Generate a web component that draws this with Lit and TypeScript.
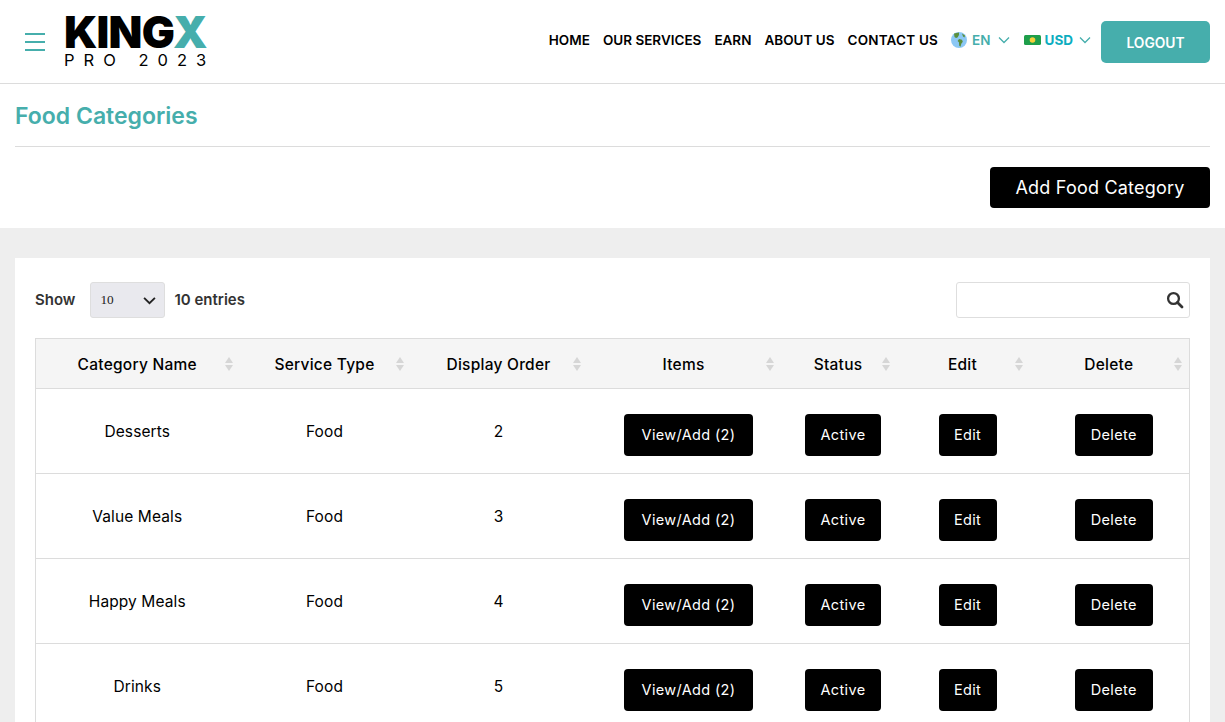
import { LitElement, html, css } from "lit";
import { customElement } from "lit/decorators.js";

const rows = [
  ["Desserts", "Food", "2"],
  ["Value Meals", "Food", "3"],
  ["Happy Meals", "Food", "4"],
  ["Drinks", "Food", "5"],
];
const heads = ["Category Name", "Service Type", "Display Order", "Items", "Status", "Edit", "Delete"];
const cols = ["c1", "c2", "c3", "c4", "c5", "c6", "c7"];

const chevron = html`<svg class="chev" viewBox="0 0 12 8" width="12" height="8"><path d="M1 1.5l5 5 5-5" fill="none" stroke="currentColor" stroke-width="1.3"/></svg>`;
const sortIcon = html`<svg class="sort" viewBox="0 0 8 14" width="8" height="14"><path d="M4 0L8 6H0Z" fill="#d6d6d6"/><path d="M4 14L8 8H0Z" fill="#d6d6d6"/></svg>`;

@customElement("app-root")
export class AppRoot extends LitElement {
  static styles = css`
    :host {
      display: block;
      height: 722px;
      overflow: hidden;
      background: #eeeeee;
      font-family: Inter, "Noto Sans", sans-serif;
      color: #000;
    }
    .top { background: #fff; }
    header {
      height: 83px;
      border-bottom: 1px solid #dcdcdc;
      display: flex;
      align-items: center;
      padding: 0 15px 0 25px;
    }
    .burger { width: 20px; display: flex; flex-direction: column; gap: 6px; margin-right: 19px; margin-top: 1px; }
    .burger i { display: block; height: 2px; background: #46aeac; }
    .logo { display: flex; flex-direction: column; width: 150px; margin-bottom: 2px; }
    .king { font-size: 44px; line-height: 38px; font-weight: 900; letter-spacing: -0.8px; }
    .king span { color: #46aeac; }
    .pro { font-size: 16.5px; line-height: 18px; letter-spacing: 9px; font-weight: 400; white-space: nowrap; }
    nav { margin-left: auto; display: flex; align-items: center; gap: 13px; font-size: 13.5px; font-weight: 600; white-space: nowrap; margin-top: -3px; }
    .wide { letter-spacing: .2px; }
    .lang { display: flex; align-items: center; gap: 5px; color: #46aeac; }
    .lang.usd { color: #0cadc0; margin-left: 1px; gap: 4px; font-weight: 700; }
    .chev { color: #46aeac; margin-left: 2px; }
    .logout {
      width: 109px; height: 42px; box-sizing: border-box; padding-top: 2px; border-radius: 5px; background: #46aeac; color: #fff;
      display: flex; align-items: center; justify-content: center; font-size: 13.8px; font-weight: 600;
      margin-left: -3px; margin-top: 3px;
    }
    .title { margin: 0 15px; height: 63px; padding-top: 1px; border-bottom: 1px solid #dcdcdc; display: flex; align-items: center; box-sizing: border-box; }
    h1 { margin: 0; font-size: 23px; font-weight: 600; color: #46aeac; }
    .actions { display: flex; justify-content: flex-end; padding: 20px 15px; }
    .add {
      width: 220px; height: 41px; background: #000; color: #fff; border-radius: 4px;
      display: flex; align-items: center; justify-content: center; font-size: 18px; letter-spacing: .2px;
    }
    .card { background: #fff; margin: 30px 15px 0; padding: 24px 20px 0; height: 500px; }
    .controls { display: flex; align-items: center; height: 36px; font-size: 15px; font-weight: 600; color: #333; }
    .controls > span { margin-top: -1px; }
    .select {
      width: 75px; height: 36px; box-sizing: border-box; margin: 0 9px 0 15px; padding: 0 8px 0 9px;
      background: #e9e9ee; border: 1px solid #dedede; border-radius: 3px;
      display: flex; align-items: center; justify-content: space-between;
      font-family: "Liberation Serif", serif; font-weight: 400; font-size: 13.3px; color: #222;
    }
    .select svg { color: #222; }
    .search {
      margin-left: auto; width: 234px; height: 36px; box-sizing: border-box;
      border: 1px solid #dedede; border-radius: 3px;
      display: flex; align-items: center; justify-content: flex-end; padding-right: 5px;
    }
    table { margin-top: 20px; width: 1154px; border-collapse: collapse; table-layout: fixed; font-size: 15.5px; letter-spacing: .1px; }
    .c1 { width: 204px; } .c2 { width: 171px; } .c3 { width: 177px; } .c4 { width: 193px; }
    .c5 { width: 116px; } .c6 { width: 133px; } .c7 { width: 160px; }
    tr { border: 1px solid #dcdcdc; }
    th { position: relative; height: 48px; padding: 1px 1px 0 0; background: #f5f5f5; font-weight: 500; text-align: center; letter-spacing: .25px; }
    th .sort { position: absolute; right: 7px; top: 18px; }
    td { height: 83px; padding: 1px 1px 0 0; text-align: center; }
    td.b { padding: 0 0 0 9px; }
    .btn {
      display: inline-flex; align-items: center; justify-content: center; height: 42px;
      background: #000; color: #fff; border-radius: 4px; font-size: 14.5px; letter-spacing: .35px; margin-top: 7px;
    }
    .w-view { width: 129px; } .w-active { width: 76px; } .w-edit { width: 58px; } .w-del { width: 78px; }
  `;
  render() {
    return html`
      <div class="top">
        <header>
          <div class="burger"><i></i><i></i><i></i></div>
          <div class="logo">
            <div class="king">KING<span>X</span></div>
            <div class="pro">PRO 2023</div>
          </div>
          <nav>
            <span>HOME</span><span>OUR SERVICES</span><span>EARN</span><span>ABOUT US</span><span class="wide">CONTACT US</span>
            <span class="lang">
              <svg width="16" height="16" viewBox="0 0 16 16"><circle cx="8" cy="8" r="8" fill="#8cc8f5"/><path d="M3 1.5L8 0.5 8 3 6.5 5.5 5 6 3.5 5ZM8 7l3 .8.8 2-1.5 2-.8 3-1.3-1-.3-3.5L6.6 9ZM11 1.5l3 2-.5 2L12 4.5Z" fill="#5b8f3c"/></svg>
              EN ${chevron}
            </span>
            <span class="lang usd">
              <svg width="17" height="10" viewBox="0 0 17 10"><rect width="17" height="10" rx="1.5" fill="#1e9e4a"/><circle cx="8.5" cy="5" r="2.8" fill="#f6cf3a"/></svg>
              USD ${chevron}
            </span>
            <div class="logout">LOGOUT</div>
          </nav>
        </header>
        <div class="title"><h1>Food Categories</h1></div>
        <div class="actions"><div class="add">Add Food Category</div></div>
      </div>
      <div class="card">
        <div class="controls">
          <span>Show</span>
          <div class="select">10
            <svg viewBox="0 0 12 8" width="13" height="9"><path d="M1 1.5l5 5 5-5" fill="none" stroke="currentColor" stroke-width="1.7"/></svg>
          </div>
          <span>10 entries</span>
          <div class="search">
            <svg width="18" height="18" viewBox="0 0 18 18"><circle cx="7.5" cy="7.5" r="5.4" fill="none" stroke="#333" stroke-width="2.3"/><path d="M11.5 11.5L16 16" stroke="#333" stroke-width="2.8" stroke-linecap="round"/></svg>
          </div>
        </div>
        <table>
          <colgroup>${cols.map((c) => html`<col class=${c} />`)}</colgroup>
          <thead><tr>${heads.map((h) => html`<th>${h}${sortIcon}</th>`)}</tr></thead>
          <tbody>
            ${rows.map(
              (r) => html`<tr>
                <td>${r[0]}</td><td>${r[1]}</td><td>${r[2]}</td>
                <td class="b"><span class="btn w-view">View/Add (2)</span></td>
                <td class="b"><span class="btn w-active">Active</span></td>
                <td class="b"><span class="btn w-edit">Edit</span></td>
                <td class="b"><span class="btn w-del">Delete</span></td>
              </tr>`
            )}
          </tbody>
        </table>
      </div>
    `;
  }
}
